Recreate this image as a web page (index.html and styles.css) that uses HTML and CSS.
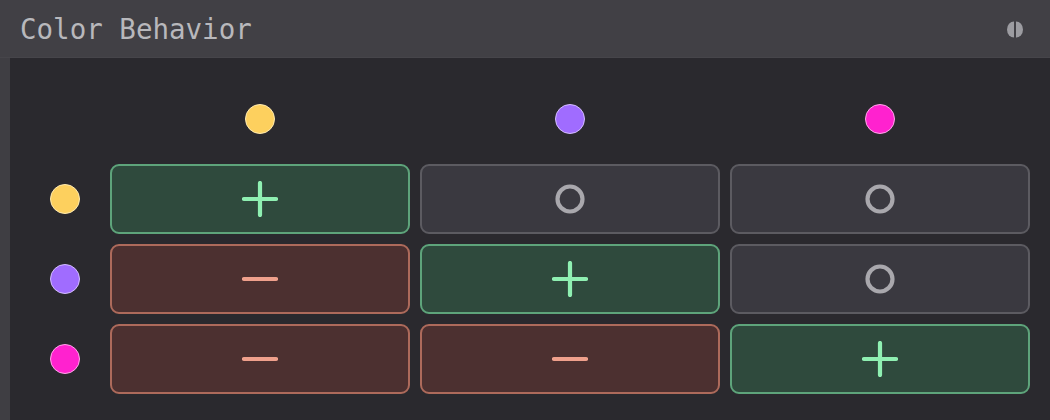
FILE: index.html
```html
<!DOCTYPE html>
<html>
<head>
<meta charset="utf-8">
<link rel="stylesheet" href="styles.css">
</head>
<body>
<div class="app">
  <header class="header">
    <h1 class="title">Color Behavior</h1>
    <svg class="pause" width="16" height="17" viewBox="0 0 16 17">
      <path d="M7 0.5 A7 8 0 0 0 7 16.5 Z" fill="#9c9ca1"/>
      <path d="M9 0.5 A7 8 0 0 1 9 16.5 Z" fill="#9c9ca1"/>
    </svg>
  </header>
  <div class="body">
    <div class="strip"></div>
    <main class="panel">
      <div class="grid">
        <div class="label"></div>
        <div class="label"><span class="dot yellow"></span></div>
        <div class="label"><span class="dot purple"></span></div>
        <div class="label"><span class="dot magenta"></span></div>

        <div class="label"><span class="dot yellow"></span></div>
        <div class="cell attract"><svg viewBox="0 0 36 36"><path d="M18 2V34M2 18H34"/></svg></div>
        <div class="cell neutral"><svg viewBox="0 0 36 36"><circle cx="18" cy="18" r="12.5"/></svg></div>
        <div class="cell neutral"><svg viewBox="0 0 36 36"><circle cx="18" cy="18" r="12.5"/></svg></div>

        <div class="label"><span class="dot purple"></span></div>
        <div class="cell repel"><svg viewBox="0 0 36 36"><path d="M2 18H34"/></svg></div>
        <div class="cell attract"><svg viewBox="0 0 36 36"><path d="M18 2V34M2 18H34"/></svg></div>
        <div class="cell neutral"><svg viewBox="0 0 36 36"><circle cx="18" cy="18" r="12.5"/></svg></div>

        <div class="label"><span class="dot magenta"></span></div>
        <div class="cell repel"><svg viewBox="0 0 36 36"><path d="M2 18H34"/></svg></div>
        <div class="cell repel"><svg viewBox="0 0 36 36"><path d="M2 18H34"/></svg></div>
        <div class="cell attract"><svg viewBox="0 0 36 36"><path d="M18 2V34M2 18H34"/></svg></div>
      </div>
    </main>
  </div>
</div>
</body>
</html>
```
FILE: styles.css
```css
* { box-sizing: border-box; }
html, body { margin: 0; padding: 0; }
body {
  width: 1050px;
  height: 420px;
  overflow: hidden;
  background: #2a292e;
  font-family: "DejaVu Sans Mono", monospace;
}
.app { display: flex; flex-direction: column; height: 420px; }
.header {
  height: 58px;
  background: #414045;
  display: flex;
  align-items: center;
  justify-content: space-between;
  padding: 0 27px 0 20px;
  border-bottom: 1px solid #46454a;
}
.title {
  margin: 0;
  font-size: 27.5px;
  font-weight: normal;
  color: #b8b8bc;
  letter-spacing: 0;
}
.pause { display: block; margin-top: 2px; }
.body { flex: 1; display: flex; }
.strip { width: 10px; background: #3f3e43; }
.panel {
  flex: 1;
  background: #2a292e;
  padding: 26px 20px 26px 20px;
}
.grid {
  display: grid;
  grid-template-columns: 70px repeat(3, 300px);
  grid-template-rows: repeat(4, 70px);
  gap: 10px;
}
.label { display: flex; align-items: center; justify-content: center; }
.dot {
  width: 30px;
  height: 30px;
  border-radius: 50%;
  border: 1.5px solid;
}
.yellow { background: #fdd05e; border-color: #ffeab0; }
.purple { background: #a06cff; border-color: #d4beff; }
.magenta { background: #ff22cf; border-color: #ffa8ea; }
.cell {
  border-radius: 9px;
  border: 2px solid;
  display: flex;
  align-items: center;
  justify-content: center;
}
.cell svg {
  width: 36px;
  height: 36px;
  fill: none;
  stroke-width: 4.2;
  stroke-linecap: round;
}
.attract { background: #2f4a3d; border-color: #5ea47b; }
.attract svg { stroke: #8ff0b2; }
.repel { background: #4c3030; border-color: #ad6a5b; }
.repel svg { stroke: #efa08c; }
.neutral { background: #3a3940; border-color: #5c5b61; }
.neutral svg { stroke: #a9a8ad; }
```
